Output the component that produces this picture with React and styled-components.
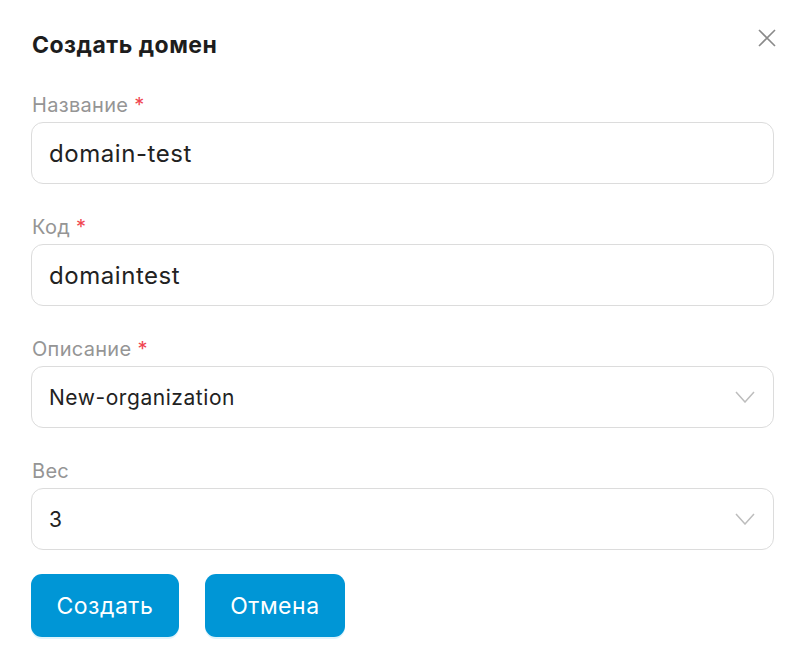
import React from 'react'
import styled, { createGlobalStyle } from 'styled-components'

const GlobalStyle = createGlobalStyle`
  html, body {
    margin: 0;
    padding: 0;
    background: #fff;
    font-family: Inter, "Noto Sans", sans-serif;
    color: #1f1f1f;
  }
`

const Dialog = styled.div`
  width: 809px;
  box-sizing: border-box;
  padding: 26px 35px 34px 31px;
`

const Header = styled.div`
  display: flex;
  justify-content: space-between;
  align-items: flex-start;
  margin-bottom: 26px;
`

const Title = styled.h2`
  margin: 0 0 0 1px;
  font-size: 23px;
  font-weight: 700;
  letter-spacing: 0.5px;
  line-height: 38px;
  color: #1d1d1d;
`

const CloseBtn = styled.button`
  border: none;
  background: none;
  padding: 0;
  margin: 3px -2px 0 0;
  width: 18px;
  height: 18px;
  display: flex;
  cursor: pointer;
`

const Form = styled.div`
  display: flex;
  flex-direction: column;
  gap: 28px;
`

const Field = styled.div`
  display: flex;
  flex-direction: column;
  gap: 3px;
`

const Label = styled.label`
  font-size: 20px;
  letter-spacing: 0.3px;
  line-height: 27px;
  color: #959595;
  padding: 2px 0 0 1px;

  span {
    color: #f0454f;
  }
`

const Box = styled.div`
  height: 62px;
  box-sizing: border-box;
  border: 1px solid #dcdcdc;
  border-radius: 12px;
  display: flex;
  align-items: center;
  justify-content: space-between;
  padding: 0 18px 0 17px;
  font-size: ${p => (p.$select ? '21px' : '24px')};
  letter-spacing: 0.55px;
  color: #222;
`

const Actions = styled.div`
  display: flex;
  gap: 26px;
  margin-top: 24px;
`

const Button = styled.button`
  height: 63px;
  padding: 0 25.5px;
  border: none;
  border-radius: 11px;
  background: #0096d6;
  color: #fff;
  font-family: inherit;
  font-size: 23px;
  letter-spacing: 0.5px;
  box-shadow: 0 2px 0 #dff4fc;
  cursor: pointer;
`

const Chevron = () => (
  <svg width="20" height="12" viewBox="0 0 20 12" fill="none">
    <path d="M1 1l9 10 9-10" stroke="#bdbdbd" strokeWidth="1.5" />
  </svg>
)

const fields = [
  { label: 'Название', value: 'domain-test', required: true },
  { label: 'Код', value: 'domaintest', required: true },
  { label: 'Описание', value: 'New-organization', required: true, select: true },
  { label: 'Вес', value: '3', select: true },
]

export default function App() {
  return (
    <>
      <GlobalStyle />
      <Dialog>
        <Header>
          <Title>Создать домен</Title>
          <CloseBtn aria-label="close">
            <svg width="18" height="18" viewBox="0 0 18 18">
              <path d="M1 1l16 16M17 1L1 17" stroke="#8a8a8a" strokeWidth="1.6" />
            </svg>
          </CloseBtn>
        </Header>
        <Form>
          {fields.map(f => (
            <Field key={f.label}>
              <Label>
                {f.label}
                {f.required && <span> *</span>}
              </Label>
              <Box $select={f.select}>
                {f.value}
                {f.select && <Chevron />}
              </Box>
            </Field>
          ))}
        </Form>
        <Actions>
          <Button>Создать</Button>
          <Button>Отмена</Button>
        </Actions>
      </Dialog>
    </>
  )
}
